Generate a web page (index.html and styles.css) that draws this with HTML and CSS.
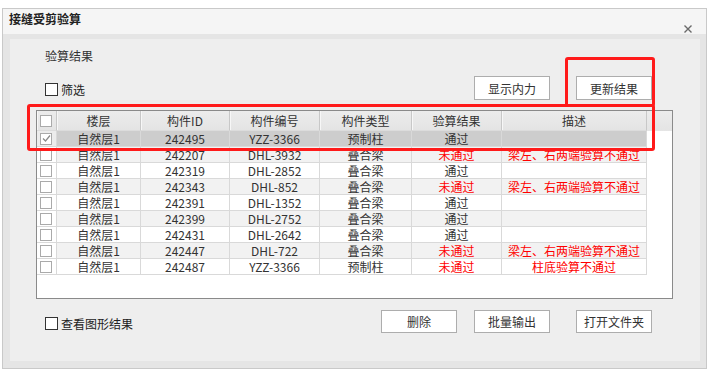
FILE: index.html
```html
<!DOCTYPE html>
<html lang="zh-CN">
<head>
<meta charset="utf-8">
<title>接缝受剪验算</title>
<link rel="stylesheet" href="styles.css">
</head>
<body>
<div class="window">
  <div class="titlebar">
    <span class="title">接缝受剪验算</span>
    <svg class="close" width="8" height="8" viewBox="0 0 8 8"><path d="M0.5 0.5L7.5 7.5M7.5 0.5L0.5 7.5" stroke="#6a6a6a" stroke-width="1.4" fill="none"/></svg>
  </div>
  <div class="frame">
    <div class="panel">
      <div class="section-label">验算结果</div>
      <div class="toolbar">
        <label class="chk"><span class="box"></span><span class="chk-text">筛选</span></label>
        <button class="btn btn-first">显示内力</button>
        <button class="btn btn-wide">更新结果</button>
      </div>
      <div class="table">
        <div class="row head">
          <div class="c cc"><span class="cb"></span></div>
          <div class="c">楼层</div>
          <div class="c">构件ID</div>
          <div class="c">构件编号</div>
          <div class="c">构件类型</div>
          <div class="c">验算结果</div>
          <div class="c">描述</div>
          <div class="c fill"></div>
        </div>
        <div class="row sel">
          <div class="c cc"><span class="cb checked"><svg width="9" height="9" viewBox="0 0 9 9"><path d="M1 4.5L3.5 7L8 1.5" stroke="#8a8a8a" stroke-width="1.2" fill="none"/></svg></span></div>
          <div class="c">自然层1</div><div class="c">242495</div><div class="c">YZZ-3366</div><div class="c">预制柱</div><div class="c">通过</div><div class="c"></div><div class="c fill"></div>
        </div>
        <div class="row odd">
          <div class="c cc"><span class="cb"></span></div>
          <div class="c">自然层1</div><div class="c">242207</div><div class="c">DHL-3932</div><div class="c">叠合梁</div><div class="c red">未通过</div><div class="c red">梁左、右两端验算不通过</div><div class="c fill"></div>
        </div>
        <div class="row">
          <div class="c cc"><span class="cb"></span></div>
          <div class="c">自然层1</div><div class="c">242319</div><div class="c">DHL-2852</div><div class="c">叠合梁</div><div class="c">通过</div><div class="c"></div><div class="c fill"></div>
        </div>
        <div class="row odd">
          <div class="c cc"><span class="cb"></span></div>
          <div class="c">自然层1</div><div class="c">242343</div><div class="c">DHL-852</div><div class="c">叠合梁</div><div class="c red">未通过</div><div class="c red">梁左、右两端验算不通过</div><div class="c fill"></div>
        </div>
        <div class="row">
          <div class="c cc"><span class="cb"></span></div>
          <div class="c">自然层1</div><div class="c">242391</div><div class="c">DHL-1352</div><div class="c">叠合梁</div><div class="c">通过</div><div class="c"></div><div class="c fill"></div>
        </div>
        <div class="row odd">
          <div class="c cc"><span class="cb"></span></div>
          <div class="c">自然层1</div><div class="c">242399</div><div class="c">DHL-2752</div><div class="c">叠合梁</div><div class="c">通过</div><div class="c"></div><div class="c fill"></div>
        </div>
        <div class="row">
          <div class="c cc"><span class="cb"></span></div>
          <div class="c">自然层1</div><div class="c">242431</div><div class="c">DHL-2642</div><div class="c">叠合梁</div><div class="c">通过</div><div class="c"></div><div class="c fill"></div>
        </div>
        <div class="row odd">
          <div class="c cc"><span class="cb"></span></div>
          <div class="c">自然层1</div><div class="c">242447</div><div class="c">DHL-722</div><div class="c">叠合梁</div><div class="c red">未通过</div><div class="c red">梁左、右两端验算不通过</div><div class="c fill"></div>
        </div>
        <div class="row">
          <div class="c cc"><span class="cb"></span></div>
          <div class="c">自然层1</div><div class="c">242487</div><div class="c">YZZ-3366</div><div class="c">预制柱</div><div class="c red">未通过</div><div class="c red">柱底验算不通过</div><div class="c fill"></div>
        </div>
      </div>
      <div class="footer">
        <label class="chk"><span class="box"></span><span class="chk-text">查看图形结果</span></label>
        <button class="btn btn-first">删除</button>
        <button class="btn btn-mid">批量输出</button>
        <button class="btn btn-wide">打开文件夹</button>
      </div>
    </div>
  </div>
</div>
<div class="mark mark-table"></div>
<div class="mark mark-update"></div>
</body>
</html>
```
FILE: styles.css
```css
* { box-sizing: border-box; }
html, body { margin: 0; padding: 0; }
body {
  position: relative;
  width: 715px;
  height: 373px;
  background: #ffffff;
  font-family: "Noto Sans CJK SC", "Noto Sans", sans-serif;
  font-size: 12px;
  color: #333;
  overflow: hidden;
}
.window {
  margin: 8px 0 0 2px;
  width: 705px;
  height: 361px;
  border: 1px solid #c9c9c9;
  display: flex;
  flex-direction: column;
}
.titlebar {
  height: 25px;
  background: #f5f5f5;
  display: flex;
  justify-content: space-between;
  align-items: flex-start;
  padding-left: 6px;
}
.title {
  font-weight: bold;
  font-size: 12px;
  line-height: 20px;
  color: #222;
}
.close {
  align-self: flex-end;
  margin: 0 14px 1px 0;
}
.frame {
  flex: 1;
  background: #e5e5e5;
  padding: 5px 6px 7px 7px;
  display: flex;
}
.panel {
  flex: 1;
  background: #eeeeee;
  display: flex;
  flex-direction: column;
}
.section-label {
  margin: 9px 0 0 35px;
  line-height: 16px;
  height: 16px;
}
.toolbar, .footer {
  display: flex;
  align-items: flex-end;
  padding-right: 48px;
}
.toolbar { margin-top: 12px; height: 24px; }
.footer { margin-top: 11px; height: 23px; }
.chk {
  display: flex;
  align-items: center;
  margin-left: 35px;
  margin-bottom: 4px;
  height: 13px;
}
.footer .chk { margin-bottom: 3px; }
.box {
  width: 13px;
  height: 13px;
  border: 1px solid #333;
  background: #fff;
}
.chk-text {
  margin-left: 3px;
  line-height: 13px;
  color: #222;
}
.btn {
  width: 76px;
  height: 100%;
  border: 1px solid #adadad;
  background: #fff;
  font-family: "Noto Sans CJK SC", sans-serif;
  font-size: 12px;
  color: #333;
  padding: 0;
}
.btn-first { margin-left: auto; }
.btn-mid { margin-left: 17px; }
.btn-wide { margin-left: 26px; }
.table {
  margin: 10px 0 0 26px;
  width: 637px;
  height: 189px;
  border: 1px solid #8a8a8a;
  background: #fff;
}
.row {
  display: grid;
  grid-template-columns: 20px 84px 89px 90px 92px 90px 145px 1fr;
  height: 16px;
}
.c {
  border-right: 1px solid #d9d9d9;
  border-bottom: 1px solid #d9d9d9;
  text-align: center;
  line-height: 15px;
  white-space: nowrap;
  overflow: hidden;
}
.c.fill { border: none; background: #fff; }
.cc { display: flex; align-items: center; justify-content: center; padding-right: 1px; }
.row.head { height: 20px; }
.row.head .c {
  background: linear-gradient(#ececec, #e4e4e4);
  border-right: 1px solid #c8c8c8;
  border-bottom: 1px solid #dcdcdc;
  box-shadow: inset 1px 0 #f7f7f7;
  line-height: 19px;
}
.row.head .c.fill { border: none; box-shadow: none; background: linear-gradient(#ececec, #e4e4e4); }
.row.sel .c { background: #cdcdcd; }
.row.sel .c.cc { background: #ececec; }
.row.sel .c.fill { background: #fff; }
.row.odd .c { background: #f2f2f2; }
.row.odd .c.cc { background: #fff; }
.row.odd .c.fill { background: #fff; }
.red { color: #ff0000; }
.cb {
  width: 12px;
  height: 12px;
  border: 1px solid #aaaaaa;
  background: #fff;
  display: flex;
  align-items: center;
  justify-content: center;
}
.mark {
  position: absolute;
  border: 3px solid #ff1a1a;
  border-radius: 3px;
  pointer-events: none;
}
.mark-table { left: 27px; top: 104px; width: 628px; height: 47px; }
.mark-update { left: 565px; top: 57px; width: 90px; height: 50px; }
```
